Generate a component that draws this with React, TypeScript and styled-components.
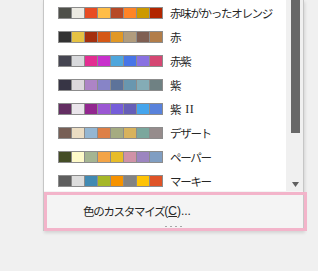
import React from 'react'
import styled, { createGlobalStyle } from 'styled-components'

const GlobalStyle = createGlobalStyle`
  html, body {
    margin: 0;
    padding: 0;
    background: #f0f0f0;
    font-family: "Noto Sans CJK JP", "Noto Sans", sans-serif;
  }
`

const Page = styled.div`
  padding-left: 43px;
  width: 318px;
  height: 271px;
  box-sizing: border-box;
`

const Panel = styled.div`
  position: relative;
  width: 261px;
  box-sizing: border-box;
  border-left: 1px solid #c6c6c6;
  border-right: 1px solid #c6c6c6;
  border-bottom: 1px solid #c6c6c6;
  background: #ffffff;
  box-shadow: 1px 2px 3px rgba(0, 0, 0, 0.12);
`

const Body = styled.div`
  display: flex;
  height: 191px;
`

const List = styled.div`
  flex: 1;
  padding-top: 1px;
  overflow: hidden;
`

const Row = styled.div`
  height: 24px;
  display: flex;
  align-items: center;
  padding-left: 14px;
  gap: 7px;
  font-size: 11.5px;
  letter-spacing: -1.3px;
  color: #262626;
  white-space: nowrap;
`

const Label = styled.span`
  display: inline-flex;
  align-items: center;
`

const Latin = styled.span<{ $serif?: boolean }>`
  letter-spacing: ${p => (p.$serif ? '0.5px' : '0')};
  font-family: ${p => (p.$serif ? '"Liberation Serif", serif' : '"Liberation Sans", sans-serif')};
  font-size: 12px;
  margin-left: ${p => (p.$serif ? '5px' : '0')};
`

const Strip = styled.div`
  display: flex;
  gap: 1px;
  padding: 1px;
  background: #8c8c8c;
`

const Swatch = styled.div<{ $color: string }>`
  width: 12px;
  height: 10px;
  background: ${p => p.$color};
`

const Track = styled.div`
  width: 17px;
  background: #f0f0f0;
  display: flex;
  flex-direction: column;
  align-items: center;
`

const Thumb = styled.div`
  width: 9px;
  height: 133px;
  margin-left: 1px;
  background: #686868;
`

const ArrowDown = styled.svg`
  margin-top: auto;
  margin-bottom: 4px;
  margin-left: 1px;
`

const Footer = styled.div`
  height: 39px;
  background: #f4f4f4;
  display: flex;
  align-items: center;
  padding-left: 39px;
  font-size: 11.5px;
  letter-spacing: -1.3px;
  color: #262626;
  white-space: nowrap;
`

const Key = styled.span`
  text-decoration: underline;
`

const Grip = styled.div`
  position: absolute;
  left: 0;
  right: 0;
  bottom: 3px;
  display: flex;
  justify-content: center;
  gap: 3px;
`

const GripDot = styled.span`
  width: 2px;
  height: 1px;
  background: #a8a8a8;
`

const Highlight = styled.div`
  position: absolute;
  left: 0;
  top: 192px;
  width: 263px;
  height: 39px;
  box-sizing: border-box;
  border: 3px solid #f3b4ca;
  pointer-events: none;
`

const themes: { name: string; suffix?: string; colors: string[] }[] = [
  { name: '赤味がかったオレンジ', colors: ['#4f504a', '#eceae2', '#e84c22', '#ffbd47', '#b64926', '#ff8427', '#cc9900', '#b22600'] },
  { name: '赤', colors: ['#323232', '#e5c243', '#a5300f', '#d55816', '#e19825', '#b19c7d', '#7f5f52', '#b27d49'] },
  { name: '赤紫', colors: ['#454551', '#d8d9dc', '#e32d91', '#c830cc', '#4ea6dc', '#4775e7', '#8971e1', '#d54773'] },
  { name: '紫', colors: ['#373545', '#dcd8dc', '#ad84c6', '#8784c7', '#5d739a', '#6997af', '#84acb6', '#6f8183'] },
  { name: '紫', suffix: 'II', colors: ['#632e62', '#eae5eb', '#92278f', '#9b57d3', '#755dd9', '#665eb8', '#45a5ed', '#5982db'] },
  { name: 'デザート', colors: ['#775f55', '#ebddc3', '#94b6d2', '#dd8047', '#a5ab81', '#d8b25c', '#7ba79d', '#968c8c'] },
  { name: 'ペーパー', colors: ['#444d26', '#fefac9', '#a5b592', '#f3a447', '#e7bc29', '#d092a7', '#9c85c0', '#809ec2'] },
  { name: 'マーキー', colors: ['#5e5e5e', '#dddddd', '#418ab3', '#a6b727', '#f69200', '#838383', '#fec306', '#df5327'] },
]

const App: React.FC = () => {
  return (
    <Page>
      <GlobalStyle />
      <Panel>
        <Body>
          <List>
            {themes.map((theme, idx) => (
              <Row key={idx}>
                <Strip>
                  {theme.colors.map((c, i) => (
                    <Swatch key={i} $color={c} />
                  ))}
                </Strip>
                <Label>
                  {theme.name}
                  {theme.suffix && <Latin $serif> {theme.suffix}</Latin>}
                </Label>
              </Row>
            ))}
          </List>
          <Track>
            <Thumb />
            <ArrowDown width="7" height="5" viewBox="0 0 7 5">
              <path d="M0 0 H7 L3.5 5 Z" fill="#606060" />
            </ArrowDown>
          </Track>
        </Body>
        <Footer>
          色のカスタマイズ
          <Latin>
            (<Key>C</Key>)...
          </Latin>
        </Footer>
        <Grip>
          <GripDot />
          <GripDot />
          <GripDot />
          <GripDot />
        </Grip>
        <Highlight />
      </Panel>
    </Page>
  )
}

export default App
